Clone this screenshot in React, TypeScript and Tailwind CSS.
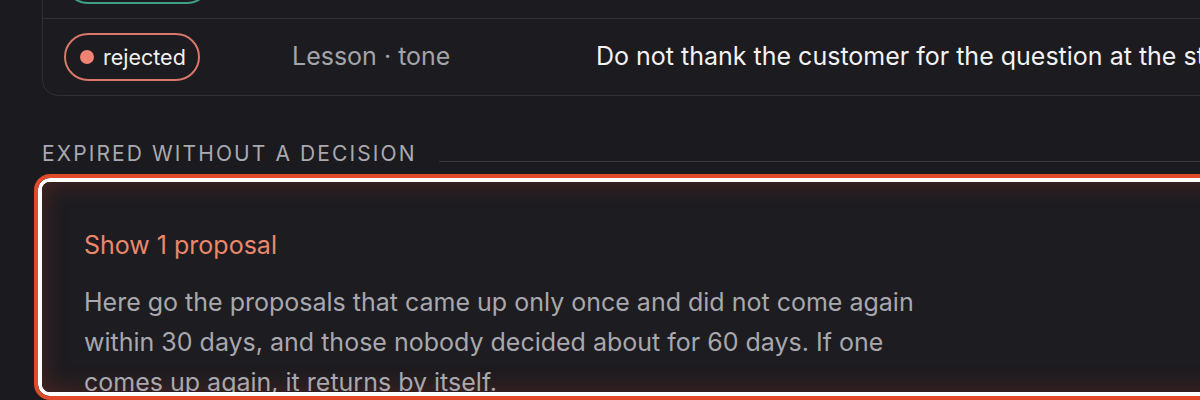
import React from "react";

export default function App() {
  return (
    <div
      className="w-[1200px] h-[400px] overflow-hidden bg-[#1b1a1e] relative"
      style={{ fontFamily: "Inter, 'Noto Sans', sans-serif" }}
    >
      <div className="pl-[42px] w-[1400px]">
        {/* Card with rows */}
        <div className="mt-[-60px] w-[1300px] border-[1.5px] border-[#2f2f34] rounded-[16px] bg-[#1c1b1f]">
          <div className="h-[77px] flex items-center px-[21px]">
            <div className="h-[48px] w-[147px] rounded-full border-2 border-[#3f9f86] flex items-center gap-[9px] px-[13px]">
              <span className="w-[14px] h-[14px] rounded-full bg-[#4fbf9f]" />
              <span className="text-[21px] text-[#eeeeee]">accepted</span>
            </div>
          </div>
          <div className="border-t-[1.5px] border-[#2f2f34] h-[77px] flex items-center px-[21px]">
            <div className="w-[228px] shrink-0">
              <div className="h-[48px] w-[136px] rounded-full border-2 border-[#d9776a] flex items-center gap-[9px] pl-[14px]">
                <span className="w-[14px] h-[14px] rounded-full bg-[#f08374]" />
                <span className="text-[21.5px] text-[#f0f0f0]">rejected</span>
              </div>
            </div>
            <div className="w-[304px] shrink-0 text-[25px] text-[#a3a3aa]">Lesson · tone</div>
            <div className="text-[25px] text-[#f2f2f2] whitespace-nowrap">
              Do not thank the customer for the question at the start
            </div>
          </div>
        </div>

        {/* Section heading */}
        <div className="mt-[46px] flex items-end gap-[22px] w-[1200px]">
          <div className="text-[21px] leading-[24px] tracking-[0.1em] text-[#a9a9b0] whitespace-nowrap">
            EXPIRED WITHOUT A DECISION
          </div>
          <div className="flex-1 h-[1.5px] bg-[#36363b] mb-[4px]" />
        </div>

        {/* Highlighted box */}
        <div className="mt-[8px] ml-[-8px] w-[1300px] h-[226px] rounded-[16px] border-[4px] border-[#e14a2b] overflow-hidden">
          <div className="h-full rounded-[12px] border-[4px] border-white overflow-hidden">
            <div className="h-full bg-[#1d1c20] shadow-[inset_0_0_24px_rgba(200,60,40,0.3)] pl-[42px] pt-[47px]">
              <div className="text-[25px] leading-[32px] text-[#ea876c]">Show 1 proposal</div>
              <p className="mt-[21px] max-w-[850px] text-[25px] leading-[40px] text-[#a8a8ae]">
                Here go the proposals that came up only once and did not come again within 30 days, and those nobody decided about for 60 days. If one comes up again, it returns by itself.
              </p>
            </div>
          </div>
        </div>
      </div>
    </div>
  );
}
